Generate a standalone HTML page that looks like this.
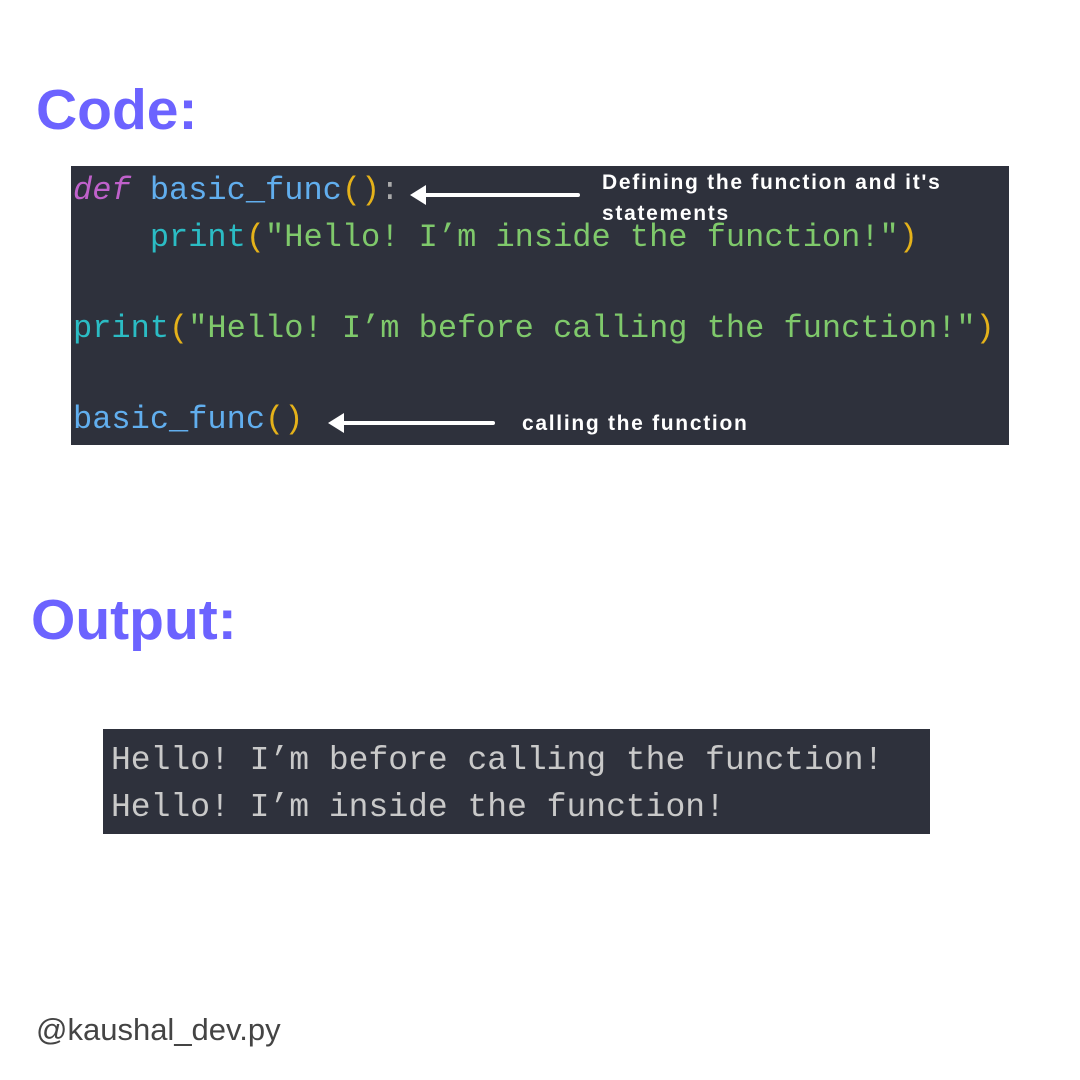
<!DOCTYPE html>
<html><head><style>
body{margin:0;width:1080px;height:1080px;background:#fff;position:relative;overflow:hidden;font-family:"Liberation Sans",sans-serif}
.h{position:absolute;color:#6c63ff;font-weight:bold;font-size:57px;line-height:1}
.box{position:absolute;background:#2e313c}
.m{position:absolute;font-family:"Liberation Mono",monospace;white-space:pre;line-height:1}
.ann{position:absolute;color:#fff;font-weight:bold;font-size:21px;letter-spacing:1.7px;line-height:31px}
</style></head><body>
<div class="h" style="left:36px;top:82px">Code:</div>
<div class="box" style="left:71px;top:166px;width:938px;height:279px"></div>
<div class="m" style="left:73px;top:175px;font-size:32px"><span style="color:#c061cb;font-style:italic">def</span> <span style="color:#61aeee">basic_func</span><span style="color:#e5b21a">()</span><span style="color:#aaa">:</span></div>
<div class="m" style="left:73px;top:222px;font-size:32px">    <span style="color:#2bbcc4">print</span><span style="color:#e5b21a">(</span><span style="color:#7fc96b">"Hello! I’m inside the function!"</span><span style="color:#e5b21a">)</span></div>
<div class="m" style="left:73px;top:313px;font-size:32px"><span style="color:#2bbcc4">print</span><span style="color:#e5b21a">(</span><span style="color:#7fc96b">"Hello! I’m before calling the function!"</span><span style="color:#e5b21a">)</span></div>
<div class="m" style="left:73px;top:404px;font-size:32px"><span style="color:#61aeee">basic_func</span><span style="color:#e5b21a">()</span></div>
<svg style="position:absolute;left:0;top:0" width="1080" height="1080">
<line x1="420" y1="195" x2="578" y2="195" stroke="#fff" stroke-width="4" stroke-linecap="round"/>
<path d="M410 195 L426 185 L426 205 Z" fill="#fff"/>
<line x1="340" y1="423" x2="493" y2="423" stroke="#fff" stroke-width="4" stroke-linecap="round"/>
<path d="M328 423 L344 413 L344 433 Z" fill="#fff"/>
</svg>
<div class="ann" style="left:602px;top:167px">Defining the function and it's<br>statements</div>
<div class="ann" style="left:522px;top:408px">calling the function</div>
<div class="h" style="left:31px;top:592px">Output:</div>
<div class="box" style="left:103px;top:729px;width:827px;height:105px"></div>
<div class="m" style="left:111px;top:744px;font-size:33px;color:#c9c9c9">Hello! I’m before calling the function!</div>
<div class="m" style="left:111px;top:791px;font-size:33px;color:#c9c9c9">Hello! I’m inside the function!</div>
<div style="position:absolute;left:36px;top:1012px;font-size:31px;color:#444">@kaushal_dev.py</div>
</body></html>
